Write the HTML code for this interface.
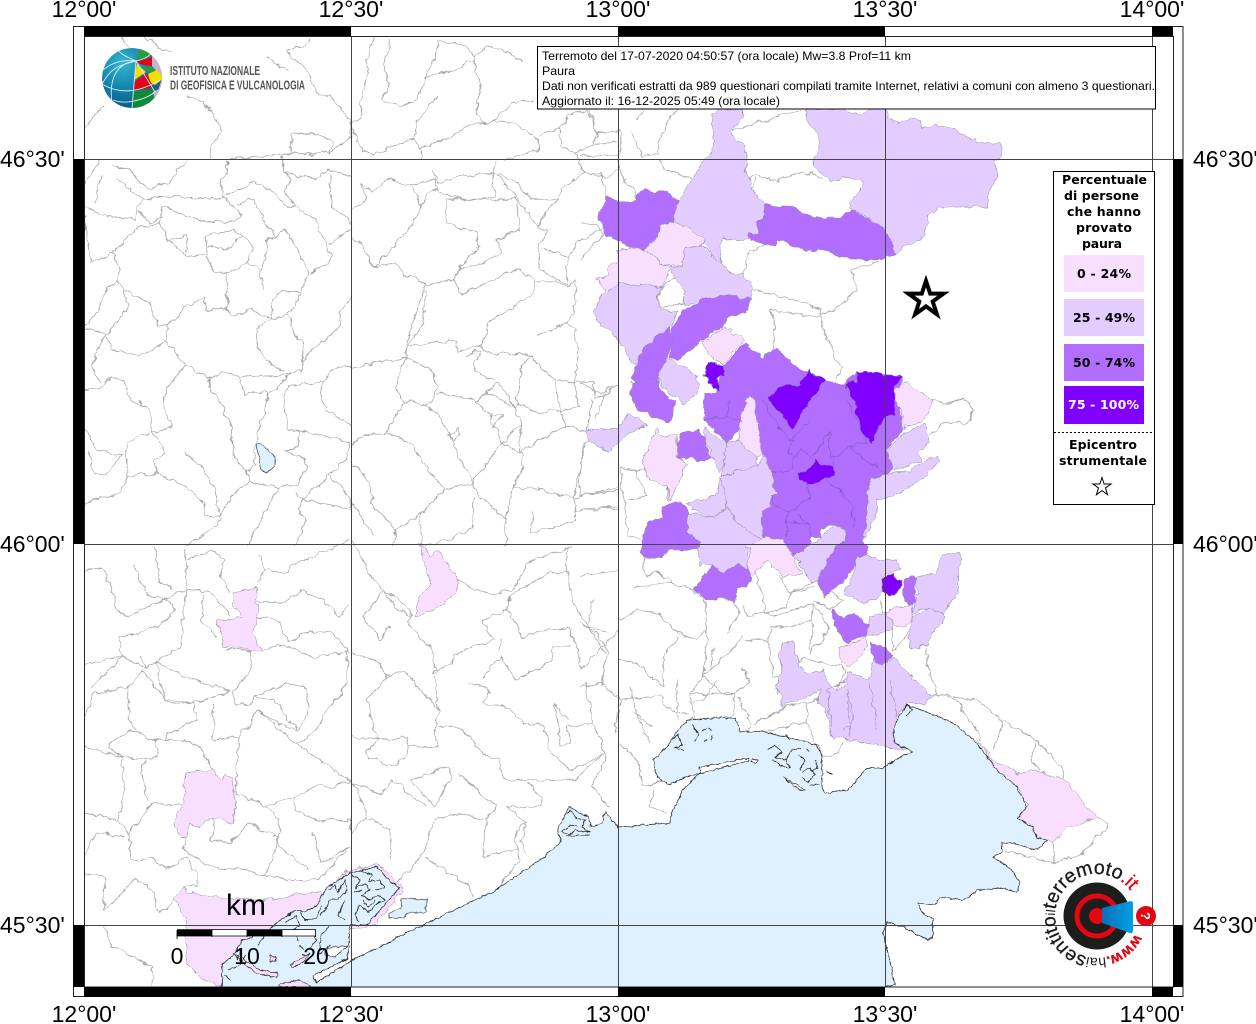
<!DOCTYPE html>
<html><head><meta charset="utf-8"><style>
html,body{margin:0;padding:0;background:#fff}
svg{display:block}
.a{fill:#f8deff}.b{fill:#e3ccff}.c{fill:#b26eff}.d{fill:#7f00ff}
#P polygon{stroke:#8d8799;stroke-width:.5;stroke-linejoin:round}
.l{fill:none;stroke:#a8a8a8;stroke-width:2.6;stroke-linejoin:round}
.ax{font:23px "Liberation Sans",sans-serif;fill:#000}
.t{font:12px "Liberation Sans",sans-serif;fill:#000}
.g{font:bold 12.5px "DejaVu Sans",sans-serif;fill:#000}
</style></head><body>
<svg width="1256" height="1024" viewBox="0 0 1256 1024" xmlns="http://www.w3.org/2000/svg">
<defs>
<clipPath id="m"><rect x="84" y="36" width="1089" height="951"/></clipPath>
<clipPath id="gl"><circle cx="132" cy="78" r="30"/></clipPath>
<filter id="wob" filterUnits="userSpaceOnUse" x="60" y="20" width="1140" height="990" color-interpolation-filters="sRGB">
<feTurbulence type="fractalNoise" baseFrequency=".11" numOctaves="3" seed="4" result="n"/>
<feDisplacementMap in="SourceGraphic" in2="n" scale="7" xChannelSelector="R" yChannelSelector="G"/>
<feGaussianBlur stdDeviation=".25"/>
</filter>
<filter id="wob2" filterUnits="userSpaceOnUse" x="60" y="20" width="1140" height="990" color-interpolation-filters="sRGB">
<feTurbulence type="fractalNoise" baseFrequency=".2" numOctaves="2" seed="9" result="n"/>
<feDisplacementMap in="SourceGraphic" in2="n" scale="3.500" xChannelSelector="R" yChannelSelector="G"/>
<feGaussianBlur stdDeviation=".2"/>
</filter>
<radialGradient id="gb" cx=".35" cy=".25" r=".85"><stop offset="0" stop-color="#35b6d2"/><stop offset=".55" stop-color="#0f7fa8"/><stop offset="1" stop-color="#0a4f78"/></radialGradient>
<linearGradient id="cone" x1="0" x2="1"><stop offset="0" stop-color="#0b6fb8"/><stop offset="1" stop-color="#00a0e3"/></linearGradient>
</defs>
<rect width="1256" height="1024" fill="#fff"/>
<g clip-path="url(#m)">
<g filter="url(#wob)">
<!-- boundaries -->
<g class="l" transform="translate(84,36) scale(.3406,.3333)">
<path d="M110 0 130 35M170 0 220 30 255 50M300 180 350 200 385 240 405 285 375 330 370 365M0 290 30 240 60 205M665 5 640 35 600 40 610 70 650 90 680 170 720 185 750 210 770 240 785 265 785 300 720 350M535 65 600 100M605 350 610 290 640 295 700 295 730 320 720 350 580 355 430 370 "/>
<path d="M850 5 830 70 830 120 810 200 820 235 785 265 815 345 850 355 920 325 975 310 985 340M900 10 880 90 895 140 875 190 925 210 975 190 1000 125 1030 70 1040 10M1040 10 1110 25 1145 60 1140 70 1160 130 1165 170 1150 230 1175 265M1145 60 1180 30 1250 50 1290 80M1145 70 1090 100 1000 125M1040 180 975 260 975 310M1205 250 1260 200 1320 195M985 340 1090 295 1135 265 1175 265 1205 250 1280 270 1335 310 1330 345 1270 360 1230 375M990 340 990 370M1335 295 1395 280 1420 240 1480 225 1510 300 1500 325 1568 320M1395 280 1400 330 1440 350 1500 325M1440 350 1470 410 1400 460 1390 490 1310 490 1270 440 1205 410 1210 375M1470 410 1530 430 1568 400"/>
<path d="M0 510 70 540 150 550 155 520 175 490 230 480 400 490 415 480M80 385 130 400 170 440 200 460 260 430 300 370M50 420 30 505M100 430 130 460 175 490M0 445 20 415 50 370M420 375 420 410 405 430 410 480 465 540 440 560 380 555 350 555 230 510 220 560 250 610 300 660 360 655 360 665 385 710 420 710 480 680 520 705 535 650 530 610 570 600 590 580 625 640 660 710 635 770 580 765 555 790 550 850M355 600 440 580 465 600 495 630 480 680M355 630 415 640 465 600M355 600 360 665M250 615 300 600 300 660M420 480 500 435 560 470 590 510 625 515 680 550 700 600 725 660 720 680 670 710M450 500 500 490 520 540 565 600M580 360 590 410 640 420 680 430 720 400 785 420M590 410 610 430 590 460 620 515M720 410 730 520 780 545 785 580 720 625M160 520 190 560 230 545M0 540 20 680 85 650 150 580 220 560"/>
<path d="M85 650 105 710 95 730 115 760 190 800 215 865 245 870 300 810 355 785 355 825 415 815 440 835 490 820 550 850 600 840 640 770M420 710 420 820M530 760 515 705M95 730 70 760 40 830 0 870M115 760 130 815 90 870 60 900 90 940 160 960 240 915 300 985 250 1050 230 1100 260 1170 200 1190 190 1120 130 1080 120 1030 80 1025 50 1055 0 1060M30 880 0 880M30 880 60 900 20 990 50 1040M245 870 245 915M300 985 365 1030 410 1010 460 1020 590 1020 625 1000 640 1010 640 920 610 880 605 840M550 850 505 880 510 930 530 970 590 1010M785 785 750 830 755 870 720 900 650 960 640 980"/>
<path d="M365 1030 370 1060 415 1110 410 1130 435 1170 440 1260 475 1310 500 1290 505 1215 530 1130 540 1080 610 1010M460 1020 470 1075 530 1065 540 1080M590 1080 600 1050 640 1045 700 1040 695 1090 710 1120 785 1170M590 1080 585 1110 600 1180 630 1180 780 1220 775 1260 750 1290 720 1320 640 1390 620 1370M700 1040 740 990 785 995 830 985 880 975 945 965 1000 990 1020 1000 1035 1050 1030 1080 1005 1110M945 965 915 1050 935 1090 1000 1110 1040 1130 1140 1340 1160 1380 1240 1450 1240 1530M630 1180 630 1230 590 1245 650 1270 650 1300 625 1350 570 1355 490 1340 475 1310M200 1190 240 1250 205 1275 215 1310 130 1320 120 1240 130 1220 190 1190M215 1310 295 1350 350 1400 355 1440 400 1440 440 1370 490 1340M130 1320 110 1370 0 1400M295 1250 340 1290 380 1350 400 1440M400 1445 390 1470 300 1530M0 1170 40 1240 110 1260 70 1310 30 1320 15 1250M640 1390 630 1420 650 1460 620 1530M720 1320 780 1380 785 1420 640 1390M570 1355 510 1470 480 1530"/>
<path d="M785 520 830 490 815 440 850 470 890 430 960 450 990 510 960 570 900 640 850 695 820 630 785 600M960 450 1030 430 1040 460 1010 470 990 510M1025 400 1040 440 1110 420 1205 410 1200 450 1210 480 1130 495 1070 480 1040 465M1065 490 1065 560 1150 590 1160 630 1095 710 1085 730 1010 745 950 720 915 680 850 695M1070 490 1270 490 1280 580 1210 610 1230 650 1165 685 1110 695 1085 730 1110 775 1220 720 1280 700 1320 735 1320 770 1250 820 1190 860 1165 930 1100 945 1090 915 945 930 1000 745 1000 860 950 930 945 965M1215 420 1275 490 1330 570 1360 590 1335 630 1340 700 1420 750 1420 670 1450 620 1500 590 1568 550M1330 570 1390 490M1420 665 1350 640M1320 735 1380 735 1420 755 1445 730 1445 800 1420 860 1330 900M1165 930 1180 950 1300 955 1310 960 1280 1000 1280 1050 1265 1115 1220 1040 1150 1095 1145 1090 1040 1070M1125 965 1150 945 1165 950 1145 980 1150 1010 1210 1030M1310 960 1345 1000 1385 1030 1440 1040 1450 960 1440 880 1420 860M1385 1030 1400 1130 1415 1170 1290 1240 1280 1250 1285 1160 1265 1115 1190 1070 1150 1095 1190 1140 1230 1130 1200 1180M1400 1120 1340 1130 1270 1100M1440 1040 1500 1035 1500 1090 1568 1050M1490 1090 1480 1190 1415 1165M1440 1040 1455 1110 1400 1125M1285 1250 1225 1220 1190 1130M1285 1250 1285 1300 1260 1355 1240 1450"/>
<path d="M785 1230 820 1200 890 1190 960 1220 1000 1290 1060 1360 1030 1390 990 1435 915 1480 850 1410 830 1320 785 1290M945 1095 885 1190M1060 1360 1140 1340 1225 1220 1285 1165M1260 1355 1330 1360 1440 1385 1568 1360M1440 1385 1470 1220M1145 1385 1140 1480 1045 1520 990 1530 990 1435M1320 1430 1310 1490 1440 1460 1440 1385M1440 1430 1568 1410M915 1480 910 1530M785 1400 850 1500M1070 1200 1100 1180 1105 1195 1085 1215Z"/>
</g>
<g class="l" transform="translate(84,540) scale(.3406,.3333)">
<path d="M0 90 50 80 65 110 100 220 130 230 250 170 300 150 360 150 410 200 430 230M210 20 220 120 260 150M300 30 300 150 290 240 285 320 180 385 165 350M150 70 170 140 200 175 250 180 265 210 250 240 165 280 105 290 115 350 20 440M300 60 380 30 410 60 400 110 430 160M510 40 530 90 510 130M530 90 590 100 620 70 780 0M350 160 345 240 390 290M510 180 580 190 640 150 690 170 750 230 780 190M510 230 570 240 600 300 650 280 720 270 780 340M520 330 590 315 680 355 770 330 775 430 715 510 700 540 680 570 640 600 620 610M420 330 490 330 490 390 440 455 440 490 490 495 500 470 590 430 650 440 660 500 630 575 560 545 510 510M210 365 300 410 430 455 320 490 240 480 210 365M500 470 560 480 630 575M510 510 460 590 450 650 445 760 520 790 530 800 620 770 690 735 725 740 785 720M510 510 620 610 750 700 785 730 870 760 905 720 1000 800M460 590 380 600 380 490M320 490 330 540 250 580 240 600 210 600 130 570 70 620 110 650 180 660 215 650 210 600M240 600 290 600 345 620 380 700 300 710M0 620 70 640 110 650 115 780 100 840 130 880 200 790 290 790M180 660 170 710 185 780M0 820 100 840M130 880 140 960 200 950 240 990 300 950 330 1000 330 1040 290 1040M300 890 290 930 370 980 460 985 540 1010 590 1020 690 1020 780 920M380 830 375 900 430 910 480 850 570 890 555 950 530 1010M530 800 575 840 570 920 660 990M620 770 620 810 680 840 780 840 785 880M670 880 700 970 780 920M0 950 30 880 120 890M0 1000 60 1010 60 1110 150 1020 200 1050 220 1120 265 1080M60 1160 80 1220 200 1280 200 1340M0 540 30 460 130 440 170 390M130 440 130 530 150 570M170 390 250 490 320 490M0 370 50 365 115 350 180 385"/>
<path d="M785 0 830 80 850 120 880 150 950 200 960 230 950 250 1020 330 1030 400 1080 370 1090 340 1200 300 1170 240 1240 210 1250 170 1310 130 1360 100 1420 95M1100 120 1150 150 1200 160 1260 150 1300 70 1430 20M1240 210 1275 260 1285 290 1420 260 1450 330 1460 390 1568 270M1420 20 1420 100 1440 200 1500 290 1530 340M960 230 920 210 880 150 820 230 870 300 900 260M785 340 870 370 890 410 940 390 1020 490 1040 510 1030 410M890 410 830 480 860 600 950 590 950 620 1040 620 1030 590 1040 510M785 590 870 600 830 630 835 650 900 680 945 655 950 620M1040 560 1100 560 1150 610 1180 650 1220 660 1230 720 1440 720 1525 640M1130 430 1190 450 1170 490 1240 500 1290 550 1350 560 1370 640 1430 690 1530 640M1170 410 1225 350 1270 420 1370 360 1380 320 1430 320M1230 300 1220 330M1100 700 1180 770 1210 800 1180 840 1170 950 1270 930 1270 870 1300 850M1070 680 1075 720 1030 800 960 720 1070 680M1030 840 1100 820 1170 840M1030 840 1000 930 960 990 880 1060M1000 950 1130 1040 1140 1070M790 730 820 790 830 830 900 870 900 960M785 880 830 830M1270 930 1280 960 1210 1050M1300 730 1340 770 1340 800 1240 800 1300 850 1280 900 1300 940M1420 540 1380 490 1400 620 1430 610 1420 560 1500 550M1470 430 1500 560 1535 650 1490 740 1540 800"/>
</g>
<g class="l" transform="translate(580,400) scale(.3333)">
<path d="M20 120 0 200 0 290 115 260M0 330 70 320 115 330M120 200 145 410 185 420M120 200 170 215 210 205 260 260 265 305M170 215 200 290 145 300M190 470 195 530 230 510 280 550 340 570 375 600 380 720 370 830 330 880 345 965M160 560 280 550M115 660 170 630 230 640 295 700 350 720 375 690M115 780 170 790 250 860 250 770 295 710M490 620 500 650 560 635 580 650 700 610 750 690 690 760 700 610M440 700 480 640 460 600M525 510 560 640 620 620 630 580 700 560M600 530 630 580 710 540 790 600 750 630 700 600M495 720 565 725 570 680 640 680 700 660M565 725 580 830 610 830 600 770M400 740 395 800 420 790 490 710M395 800 370 830 440 890 510 850 490 800M590 880 670 770 720 790 780 800 800 810 770 870M520 970 620 920 680 910 710 900 780 880M345 965 450 950M330 880 460 880 460 950M900 600 910 640 940 685 940 750 1000 680M1040 740 1040 800 1070 880 1050 890M1060 880 1130 900 1200 1010 1200 1020M0 530 60 520 115 510M40 600 20 680 80 700M0 670 50 700 85 760 60 860M0 860 60 850 120 900 105 1000"/>
<path d="M1060 0 1100 15 1150 -5 1180 30 1160 70 1100 65 1050 100"/>
</g>
<g class="l" transform="translate(580,100) scale(.3333)">
<path d="M30 30 50 100 120 90 130 125 115 170 0 165M170 60 190 30M155 100 185 170 240 160 235 130 260 70 290 30M240 180 250 205 340 240 370 190M115 180 120 230 165 270 170 300M0 200 30 230 60 220 80 285M0 370 50 375 75 405M0 480 50 420 75 405M45 130 50 100M450 95 560 60 660 30M500 240 530 225 590 245 670 215 730 235M515 265 530 235M485 530 510 450 595 420M420 420 420 490 460 525M520 570 640 600 725 630 720 645 780 620 830 570 815 510 895 485M575 630 720 650 760 770 790 800 770 840M575 630 585 700 580 750M1060 900 1100 910 1150 895 1180 930 1170 960M0 850 60 880 120 850M45 960 75 880M290 530 315 575 305 610 250 625 232 595 260 545 290 530"/>
</g>
<g class="l" transform="translate(620,680) scale(.3333)">
<path d="M0 60 40 55 120 45 130 65 165 100 210 100M30 20 40 55 50 110 90 190M170 0 170 120M205 70 250 60 290 0M210 115 290 130 340 110M355 50 390 130 385 155M400 130 490 90 500 35M430 155 560 125 560 70M560 125 610 230M610 230 650 220 665 190M920 40 1070 60 1150 125 1250 180 1330 270 1330 295M1150 125 1120 210M1250 180 1235 240 1260 270M1430 410 1465 435 1390 520 1300 550 1150 510M1300 490 1305 550M0 190 50 240 70 320 130 300M100 330 90 380 145 400M40 100 100 140"/>
</g>
<!-- filled communes -->
<g id="P">
<polygon class="a" points="183,887 190,892 227,898 265,900 288,897 305,893 326,892 345,872 378,864 405,890 375,923 367,928 340,930 305,935 271,935 250,950 222,987 200,977 186,963 185,930 186,917 174,900"/>
<polygon class="a" points="234,593 256,587 258,617 253,633 261,650 222,647 217,620 241,617 232,603"/>
<polygon class="a" points="419,543 430,555 437,550 459,580 457,593 442,605 414,618 418,600 430,585 426,570"/>
<polygon class="a" points="186,773 203,770 213,770 222,780 225,773 232,777 236,807 234,823 213,817 200,827 188,825 188,838 181,837 175,823 184,800"/>
<polygon class="a" points="977,740 997,763 1017,773 1037,770 1062,778 1097,817 1067,828 1053,843 1047,840 1037,838 1032,827 1017,818 1027,807 1017,787 997,770"/>
<polygon class="b" points="712,113 720,109 742,109 743,118 729,133 737,140 743,143 747,155 748,163 745,172 752,188 765,207 763,220 757,222 757,235 747,240 722,238 719,263 715,257 703,243 693,233 675,223 673,215 679,199 693,178 702,163 710,155 715,140 712,123"/>
<polygon class="b" points="805,109 837,109 857,115 873,109 885,109 888,117 897,123 910,118 922,122 923,128 937,125 957,130 977,142 1000,142 1002,157 995,160 997,177 990,187 988,207 968,207 940,207 928,215 925,233 905,247 895,253 887,233 875,223 850,208 853,197 863,187 862,179 843,178 833,181 815,168 813,158 820,150 818,133 807,120"/>
<polygon class="c" points="605,195 618,202 636,201 637,193 646,188 655,193 667,190 672,197 679,199 673,215 675,223 660,225 658,235 645,250 630,247 618,242 606,235 604,225 597,218 605,203"/>
<polygon class="c" points="765,203 780,206 787,204 793,208 810,215 820,218 840,218 852,210 873,223 885,228 895,253 885,259 860,260 840,258 822,248 810,251 787,245 778,240 775,246 763,244 747,238 748,234 757,235 757,222 763,220"/>
<polygon class="a" points="660,225 675,223 690,228 705,240 702,245 687,248 682,265 662,265 647,250 658,235"/>
<polygon class="a" points="618,250 630,248 645,250 662,265 671,267 662,288 643,285 620,283 607,292 597,278 607,275 610,263 618,262"/>
<polygon class="b" points="687,248 702,245 720,263 733,275 742,275 753,288 750,300 727,295 703,298 695,303 683,303 684,290 677,283 672,273 671,267 682,265"/>
<polygon class="b" points="620,283 643,285 662,288 657,298 662,310 677,312 670,327 652,347 640,360 637,365 630,360 617,337 603,327 593,313 603,293 607,292"/>
<polygon class="c" points="695,303 703,298 727,295 750,300 745,312 727,318 723,327 710,335 700,343 690,350 678,360 670,357 672,327 683,310"/>
<polygon class="c" points="670,327 672,340 668,357 658,377 635,383 632,377 640,357 647,343"/>
<polygon class="a" points="702,343 725,327 745,340 723,363 712,360"/>
<polygon class="b" points="668,357 698,377 697,393 685,403 668,393 657,377"/>
<polygon class="b" points="587,430 618,428 630,413 648,425 630,432 618,442 608,452 587,440"/>
<polygon class="c" points="632,383 657,377 663,393 675,402 673,415 670,425 663,422 652,417 638,410 630,395"/>
<polygon class="a" points="657,428 660,437 677,433 677,458 687,463 678,483 670,502 667,487 648,478 642,460 647,450 652,440"/>
<polygon class="c" points="680,433 690,430 700,430 705,438 708,453 713,460 698,462 690,458 678,460 677,447"/>
<polygon class="b" points="705,427 718,438 727,443 727,455 720,473 712,458 705,437"/>
<polygon class="b" points="737,440 757,457 757,467 738,470 722,477 725,455 727,443"/>
<polygon class="b" points="757,467 762,455 772,472 775,493 770,495 772,507 762,513 763,540 750,532 738,523 727,507 720,478 738,470"/>
<polygon class="b" points="685,503 717,497 720,478 727,507 713,518 693,510"/>
<polygon class="b" points="687,512 713,518 727,508 738,523 750,532 763,540 765,545 755,548 747,555 750,570 737,565 723,572 712,565 700,565 697,548 702,543 687,532"/>
<polygon class="c" points="662,507 680,502 690,510 687,532 702,543 697,548 678,550 670,550 655,560 643,557 642,543 647,523 663,518"/>
<polygon class="c" points="695,590 712,565 723,572 737,565 750,570 752,582 738,588 735,602 723,598 708,600"/>
<polygon class="a" points="745,547 762,537 783,537 787,547 803,575 783,577 767,560 750,578 747,563 752,548"/>
<polygon class="b" points="793,555 810,545 820,538 833,525 845,528 847,543 833,547 827,563 817,580 812,582 797,560"/>
<polygon class="c" points="703,420 706,395 716,392 723,365 745,343 762,357 777,347 783,355 797,367 808,372 825,380 843,385 857,372 877,373 902,377 900,410 903,430 887,450 893,467 887,475 870,480 867,507 868,523 862,540 867,547 867,553 853,567 845,580 825,597 817,580 827,563 833,547 847,543 845,528 833,525 822,528 820,538 812,537 810,545 793,555 785,545 783,537 763,538 762,513 772,507 770,495 775,493 772,472 762,453 755,430 755,400 745,400 745,423 727,443 717,432"/>
<polygon class="a" points="745,400 750,395 755,400 757,430 763,450 757,457 737,440 740,427 743,413"/>
<polygon class="a" points="895,390 908,382 920,393 933,400 930,410 923,420 913,423 903,430 902,410 895,400"/>
<polygon class="b" points="925,423 930,442 917,452 923,460 898,470 893,468 887,452 903,433"/>
<polygon class="b" points="923,462 938,455 940,460 927,475 908,488 887,498 877,500 875,517 870,528 863,540 862,540 868,523 867,507 870,480 887,475 895,472 908,472"/>
<polygon class="d" points="708,362 723,365 725,377 717,377 720,392 713,387 704,377"/>
<polygon class="d" points="768,398 780,388 797,385 807,375 810,367 812,375 825,380 820,390 810,400 803,413 792,430 785,420 777,410"/>
<polygon class="d" points="845,385 857,380 857,371 885,374 902,377 895,387 895,415 887,418 880,423 872,443 862,432 853,400"/>
<polygon class="d" points="798,473 810,468 815,460 822,465 833,468 835,475 823,480 815,485 807,483 800,480"/>
<polygon class="b" points="857,557 868,555 883,560 895,560 900,567 888,575 882,580 882,592 872,600 863,603 843,593 853,577"/>
<polygon class="d" points="882,580 888,577 895,573 897,580 903,580 900,588 895,595 882,592 883,585"/>
<polygon class="c" points="905,578 916,577 915,603 908,606 903,592"/>
<polygon class="b" points="915,577 937,573 942,555 960,553 958,593 943,615 930,610 923,608 913,613 918,590"/>
<polygon class="b" points="913,615 930,608 945,617 933,632 928,645 910,648 908,637 914,623"/>
<polygon class="a" points="887,610 913,605 913,623 895,627 888,617"/>
<polygon class="b" points="870,617 887,610 893,628 877,633 867,638 868,623"/>
<polygon class="c" points="832,610 843,618 855,612 868,627 867,637 857,637 847,643 840,633 833,623"/>
<polygon class="a" points="838,648 867,637 867,648 850,667 842,663"/>
<polygon class="b" points="777,655 783,643 793,643 800,667 810,675 822,670 825,678 837,690 847,683 847,672 870,678 873,657 882,667 893,657 930,695 925,705 910,702 902,708 895,720 897,742 910,750 885,747 853,740 833,738 825,708 817,702 822,690 783,707 780,693 777,687 783,667"/>
<polygon class="c" points="870,642 885,647 893,655 882,667 873,660"/>
</g>
<g fill="none" stroke="#8a5bc4" stroke-width="2.2" transform="translate(580,400) scale(.3333)">
<path d="M545 0 620 110 640 120 625 150 640 180 640 205 590 220 575 215M640 180 665 145 695 175M690 60 630 120M760 205 745 125 750 90 700 170M760 175 810 140 865 125M810 140 870 190 920 220M685 255 685 300 630 335 590 320 570 285M630 335 615 360 620 410M650 340 690 375 695 430M740 240 790 280 820 330 820 380M860 125 830 60 800 0M370 60 440 50 450 0M440 50 490 70M690 375 615 360"/>
</g>
<g fill="none" stroke="#a58ac8" stroke-width="2.2" transform="translate(620,680) scale(.3333)">
<path d="M640 180 620 30 680 0M690 170 680 30M770 150 750 0M830 110 810 0M670 150 700 120 690 60"/>
</g>
</g>
<!-- sea -->
<g filter="url(#wob2)">
<path fill="#dff1ff" stroke="#2a2a2a" stroke-width=".8" stroke-linejoin="round" d="M222 987 222 965 235 953 243 940 270 930 277 922 297 910 305 912 317 905 327 887 350 873 377 867 387 878 400 888 373 918 367 925 350 925 348 958 313 976 316 983 351 961 419 927 469 903 496 890 544 857 561 842 557 830 569 807 588 817 591 827 602 823 605 812 618 827 670 823 672 812 683 790 700 773 698 774 683 778 670 785 657 777 653 760 667 747 678 730 688 720 717 718 735 718 740 732 763 732 787 737 817 745 822 757 822 787 825 793 848 790 867 768 883 768 903 755 913 752 895 743 893 732 898 717 907 705 927 712 953 723 977 743 997 770 1017 787 1027 807 1017 818 1032 827 1037 838 1047 840 1037 850 1008 842 1002 843 1002 852 993 857 1010 868 1020 882 1017 893 1003 888 977 890 968 898 962 900 940 897 935 905 918 903 922 913 933 918 933 938 927 940 903 927 887 922 883 933 888 953 895 985 885 987 885 1000 222 1000Z"/>
<path fill="#dff1ff" stroke="#555" stroke-width=".8" d="M256 443 261 444 275 456 275 466 266 473 261 469 259 456Z"/>
<path fill="#dff1ff" stroke="#555" stroke-width=".8" d="M401 898 428 900 425 912 406 913 404 918 389 918 389 913 401 908Z"/>
<g fill="#f8deff" stroke="#2a2a2a" stroke-width=".7" stroke-linejoin="round">
<path d="M233 953 250 963 260 970 277 973 277 978 257 973 245 965Z"/>
<path d="M290 965 310 953 303 963 292 967Z"/>
<path d="M270 955 276 957 275 961 270 962Z"/>
<path d="M279 984 300 980 312 987 279 987Z"/>
<path d="M327 948 347 946 335 957 325 955Z" fill="#fff"/>
<path d="M700 767 748 758 749 760 715 770 700 773Z" fill="#fff"/>
<path d="M783 777 800 790 805 790 785 778Z" fill="#fff"/>
<path d="M753 759 758 761 756 763 752 761Z" fill="#fff"/>
</g>
<g fill="none" stroke="#222" stroke-width=".8">
<path d="M328 890 335 885 338 892 345 880 348 890 340 898 330 900 325 910 320 915M300 912 305 920 316 918 322 906M352 875 360 880 356 888 365 884 370 890 362 895 370 900 378 895 385 900 376 905 368 912 360 905 355 915 358 922M360 870 372 875 368 882 380 880 384 888 375 890M345 900 338 915 345 920M354 892 362 890M362 900 368 908 375 900M286 922 296 916 300 926 290 932 280 930M310 930 316 940 308 950M330 925 322 935 318 955 330 945M296 935 298 940M300 945 303 950M302 955 310 955M265 935 258 945M245 955 240 965 228 970M224 975 230 980M240 950 238 960"/>
<path d="M767 750 775 745 782 752 775 757 785 760 792 750 800 748M772 760 780 765 790 768 786 758M798 755 805 760 800 770M802 772 810 768 815 775 808 782 802 778M815 760 818 768 812 770M810 785 820 785M806 748 810 752M785 735 790 740M672 740 678 735 682 745 675 748 684 750M692 725 698 735 695 742M702 732 706 728M708 728 712 730M712 735 711 740M707 740 704 742"/>
<path d="M562 820 570 810 576 818 585 820 582 828 590 832 575 830 570 835 562 832 570 825 578 826M566 836 590 835"/>
<path d="M904 710 908 705 912 710 906 716M826 771 832 775"/>
</g>
</g>
</g>
<!-- grid -->
<g stroke="#444" stroke-width="1" fill="none">
<path d="M351.500 36V987M618.500 36V987M885.500 36V987M1152.500 36V987M84 159.500H1173M84 544.500H1173M84 925.500H1173"/>
</g>
<!-- frame -->
<g stroke="#222" stroke-width="1" fill="none">
<rect x="73.500" y="26.500" width="1109.500" height="970"/>
<rect x="84.500" y="36.500" width="1089" height="950.500"/>
</g>
<g fill="#000">
<rect x="84" y="26" width="267" height="10"/><rect x="618" y="26" width="267" height="10"/><rect x="1152" y="26" width="21" height="10"/>
<rect x="84" y="987" width="267" height="10"/><rect x="618" y="987" width="267" height="10"/><rect x="1152" y="987" width="21" height="10"/>
<rect x="73" y="159" width="11" height="385"/><rect x="73" y="925" width="11" height="62"/>
<rect x="1173" y="159" width="10" height="385"/><rect x="1173" y="925" width="10" height="62"/>
</g>
<!-- axis labels -->
<g class="ax" text-anchor="middle">
<text x="84" y="17">12°00'</text><text x="351" y="17">12°30'</text><text x="618" y="17">13°00'</text><text x="885" y="17">13°30'</text><text x="1152" y="17">14°00'</text>
<text x="84" y="1022">12°00'</text><text x="351" y="1022">12°30'</text><text x="618" y="1022">13°00'</text><text x="885" y="1022">13°30'</text><text x="1152" y="1022">14°00'</text>
</g>
<g class="ax"><text x="0" y="167">46°30'</text><text x="0" y="552">46°00'</text><text x="0" y="933">45°30'</text>
<text x="1193" y="167">46°30'</text><text x="1193" y="552">46°00'</text><text x="1193" y="933">45°30'</text></g>
<!-- INGV logo -->
<g clip-path="url(#gl)">
<circle cx="132" cy="78" r="30" fill="url(#gb)"/>
<path d="M136 61 141 46 165 48 165 62 152 56Z" fill="#2f9a3c"/>
<path d="M136 62 152 57 152 66 143 65Z" fill="#e2001a"/>
<path d="M150 48 165 60 165 100 155 100 162 78 152 66 152 56Z" fill="#c5b6c9"/>
<path d="M137 64 146 72 134 80 135 72Z" fill="#f2e100"/>
<path d="M143 66 152 67 157 73 148 72Z" fill="#2f9a3c"/>
<path d="M148 74 157 70 164 78 155 85 150 82Z" fill="#f2e100"/>
<path d="M135 81 147 73 153 88 133 90Z" fill="#e2001a"/>
<path d="M133 91 153 89 155 100 140 112 132 112Z" fill="#108a3a"/>
<path d="M153 92 166 85 164 96 155 100Z" fill="#c5b6c9"/>
<g fill="none" stroke="#d8eef5" stroke-width=".9">
<path d="M136 61 132 108M136 61C120 62 108 75 112 103M136 61C150 58 156 50 148 50M136 61C122 55 115 50 120 48M103 70C115 60 128 60 136 61M102 84C120 95 140 92 160 80M102 84C110 70 115 66 136 61M113 100C125 105 145 100 155 92M136 61 155 92"/>
</g>
</g>
<g font-family="Liberation Sans,sans-serif" font-weight="bold" fill="#555" font-size="12.500">
<text x="170" y="75" textLength="90" lengthAdjust="spacingAndGlyphs">ISTITUTO NAZIONALE</text>
<text x="170" y="89.500" textLength="135" lengthAdjust="spacingAndGlyphs">DI GEOFISICA E VULCANOLOGIA</text>
</g>
<!-- info box -->
<rect x="537.500" y="46.500" width="618" height="62.500" fill="#fff" stroke="#000"/>
<g class="t">
<text x="542" y="60" textLength="369" lengthAdjust="spacingAndGlyphs">Terremoto del 17-07-2020 04:50:57 (ora locale) Mw=3.8 Prof=11 km</text>
<text x="542" y="75" textLength="33" lengthAdjust="spacingAndGlyphs">Paura</text>
<text x="542" y="90" textLength="613" lengthAdjust="spacingAndGlyphs">Dati non verificati estratti da 989 questionari compilati tramite Internet, relativi a comuni con almeno 3 questionari.</text>
<text x="542" y="105" textLength="238" lengthAdjust="spacingAndGlyphs">Aggiornato il: 16-12-2025 05:49 (ora locale)</text>
</g>
<!-- epicentre -->
<polygon points="926,281 930.200,293.600 943.600,293.600 932.700,301.500 936.900,314.300 926,306.400 915.100,314.300 919.300,301.500 908.400,293.600 921.800,293.600" fill="#fff" stroke="#000" stroke-width="4" stroke-miterlimit="10"/>
<!-- legend -->
<rect x="1053.500" y="171.500" width="101" height="333" fill="#fff" stroke="#000"/>
<g class="g">
<text x="1062" y="184" textLength="85" lengthAdjust="spacing">Percentuale</text>
<text x="1064" y="200" textLength="75" lengthAdjust="spacing">di persone</text>
<text x="1067" y="216" textLength="74" lengthAdjust="spacing">che hanno</text>
<text x="1076" y="232" textLength="56" lengthAdjust="spacing">provato</text>
<text x="1082" y="248" textLength="40" lengthAdjust="spacing">paura</text>
</g>
<rect x="1064" y="255" width="80" height="37" fill="#f8deff"/>
<rect x="1064" y="299" width="80" height="37" fill="#e3ccff"/>
<rect x="1064" y="344" width="80" height="37" fill="#b26eff"/>
<rect x="1064" y="386" width="80" height="38" fill="#7f00ff"/>
<g class="g">
<text x="1077" y="278" textLength="54" lengthAdjust="spacing">0 - 24%</text>
<text x="1073" y="322" textLength="62" lengthAdjust="spacing">25 - 49%</text>
<text x="1073" y="367" textLength="62" lengthAdjust="spacing">50 - 74%</text>
<text x="1068" y="409" textLength="71" lengthAdjust="spacing" style="fill:#fff">75 - 100%</text>
</g>
<path d="M1054 432.500H1154" stroke="#000" stroke-dasharray="2 2"/>
<g class="g">
<text x="1069" y="449" textLength="68" lengthAdjust="spacing">Epicentro</text>
<text x="1059" y="465" textLength="88" lengthAdjust="spacing">strumentale</text>
</g>
<polygon points="1102,477.500 1104.100,484 1111,484 1105.500,488 1107.600,494.700 1102,490.600 1096.400,494.700 1098.500,488 1093,484 1099.900,484" fill="#fff" stroke="#000" stroke-width="1"/>
<!-- scale bar -->
<rect x="177" y="930" width="35" height="6" fill="#000"/><rect x="212" y="930" width="35" height="6" fill="#fff"/><rect x="247" y="930" width="35" height="6" fill="#000"/><rect x="282" y="930" width="33" height="6" fill="#fff"/>
<path d="M177 930V939M212 930V937M247 930V937M282 930V937M315.500 930V937M177 929.500H316M177 936H316" stroke="#000" stroke-width=".8" fill="none"/>
<g font-family="Liberation Sans,sans-serif" fill="#000" text-anchor="middle">
<text x="246" y="915" font-size="30">km</text>
<text x="177" y="964" font-size="23">0</text><text x="247" y="964" font-size="23">10</text><text x="316" y="964" font-size="23">20</text>
</g>
<!-- hai sentito logo -->
<circle cx="1097" cy="916" r="33.500" fill="#1d1d1b"/>
<circle cx="1097" cy="916" r="20" fill="none" stroke="#e30613" stroke-width="5"/>
<circle cx="1097" cy="916" r="8" fill="#e30613"/>
<path d="M1102 908 1131 901Q1133 901 1133 904V930Q1133 934 1130 933L1102 923Z" fill="url(#cone)"/>
<circle cx="1146" cy="916" r="10" fill="#e30613"/>
<text x="1146" y="921" font-family="Liberation Sans,sans-serif" font-weight="bold" font-size="13" fill="#fff" text-anchor="middle" transform="rotate(90 1146 916)">?</text>
<path id="arc" d="M1135 934A42 42 0 1 1 1135 898" fill="none"/>
<text font-family="Liberation Sans,sans-serif" font-size="19.500" fill="#1d1d1b" stroke="#1d1d1b" stroke-width=".35"><textPath href="#arc"><tspan fill="#e30613" stroke="#e30613" font-weight="bold" font-size="15">www.</tspan><tspan font-size="14" stroke="none">hai</tspan><tspan font-size="19">sentito</tspan><tspan font-size="13" stroke="none">il</tspan><tspan>terremoto</tspan><tspan fill="#e30613" stroke="#e30613" font-size="19">.it</tspan></textPath></text>
</svg>
</body></html>
